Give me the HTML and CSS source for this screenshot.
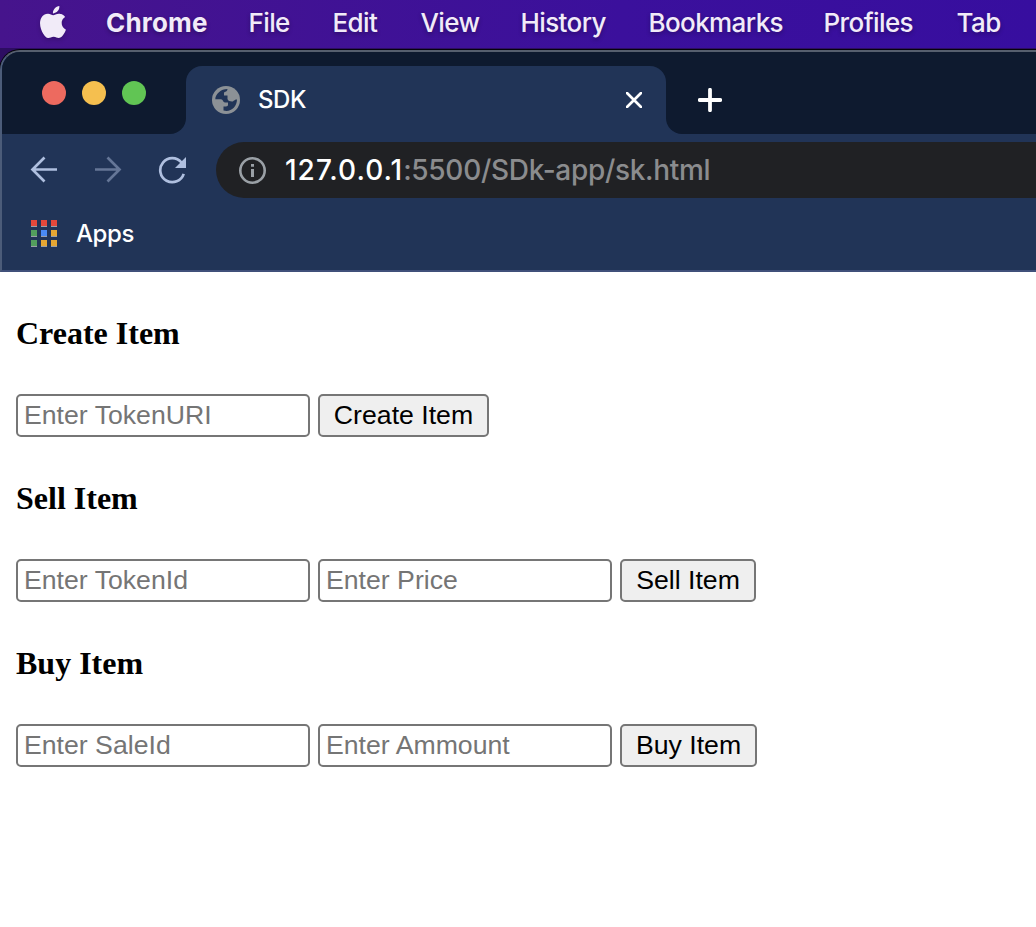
FILE: index.html
```html
<!DOCTYPE html>
<html lang="en">
<head>
<meta charset="utf-8">
<title>SDK</title>
<link rel="stylesheet" href="styles.css">
</head>
<body>
<nav class="menubar">
  <svg class="apple" viewBox="2.2 0 19.6 24" preserveAspectRatio="none"><path fill="#f1ebf8" d="M12.152 6.896c-.948 0-2.415-1.078-3.96-1.04-2.04.027-3.91 1.183-4.961 3.014-2.117 3.675-.546 9.103 1.519 12.09 1.013 1.454 2.208 3.09 3.792 3.039 1.52-.065 2.09-.987 3.935-.987 1.831 0 2.35.987 3.96.948 1.637-.026 2.676-1.48 3.676-2.948 1.156-1.688 1.636-3.325 1.662-3.415-.039-.013-3.182-1.221-3.22-4.857-.026-3.04 2.48-4.494 2.597-4.559-1.429-2.09-3.623-2.324-4.39-2.376-2-.156-3.675 1.09-4.61 1.09zM15.53 3.83c.843-1.012 1.4-2.427 1.245-3.83-1.207.052-2.662.805-3.532 1.818-.78.896-1.454 2.338-1.273 3.714 1.338.104 2.715-.688 3.559-1.701"/></svg>
  <span class="menu menu-app">Chrome</span>
  <span class="menu">File</span>
  <span class="menu">Edit</span>
  <span class="menu">View</span>
  <span class="menu">History</span>
  <span class="menu">Bookmarks</span>
  <span class="menu">Profiles</span>
  <span class="menu">Tab</span>
</nav>
<div class="desktop">
<div class="window">
  <div class="tabstrip">
    <div class="lights"><i class="light red"></i><i class="light yellow"></i><i class="light green"></i></div>
    <div class="tab">
      <svg class="globe" viewBox="0 0 28 28"><circle cx="14" cy="14" r="14" fill="#8c9196"/><path fill="#213457" d="M3.300 13.300C3.300 8 9 3 15.500 3C15.500 5 14 5.500 12 6.500V9.500H15.500V13C16 14.800 18 15.500 20 15.500C22 15.500 22 13.500 25 13.500C25 20 20 25 14.500 25L11.500 24.500V20.500H14C15.500 20.500 16 19.500 16 18.500V16.500H13C11 16.500 11 13.300 9 13.300Z"/></svg>
      <span class="tab-title">SDK</span>
      <svg class="close" viewBox="0 0 16 16"><path d="M1 1 15 15M15 1 1 15" stroke="#fff" stroke-width="2.700" stroke-linecap="round"/></svg>
    </div>
    <div class="rest"><svg class="plus" viewBox="0 0 24 24"><path d="M12 1.700V22.300M1.700 12H22.300" stroke="#fff" stroke-width="3.800" stroke-linecap="round"/></svg></div>
  </div>
  <div class="toolbar">
    <svg class="nav" viewBox="0 0 28 28" fill="none" stroke="#afbfdf" stroke-width="2.700"><path d="M27 13.500H2.500M14.500 1.500 2.500 13.500 14.500 25.500"/></svg>
    <svg class="nav" viewBox="0 0 28 28" fill="none" stroke="#657697" stroke-width="2.700"><path d="M1 13.500H25.500M13.500 1.500 25.500 13.500 13.500 25.500"/></svg>
    <svg class="nav" viewBox="0 0 28 28" fill="none" stroke="#afbfdf" stroke-width="2.700"><path d="M25.700 17.800A12 12 0 1 1 23.500 6.500"/><path fill="#afbfdf" stroke="none" d="M28 1V12H17Z"/></svg>
    <div class="omnibox">
      <svg class="info" viewBox="0 0 28 28"><circle cx="14.500" cy="14.500" r="12.200" fill="none" stroke="#9aa0a6" stroke-width="2.600"/><path fill="#9aa0a6" d="M13 8h3v2.700h-3zM13 13h3v8h-3z"/></svg>
      <span class="url"><span class="host">127.0.0.1</span><span class="path">:5500/SDk-app/sk.html</span></span>
    </div>
  </div>
  <div class="bookmarks">
    <div class="apps"><i class="r"></i><i class="r"></i><i class="r"></i><i class="g"></i><i class="b"></i><i class="y"></i><i class="g"></i><i class="y"></i><i class="y"></i></div>
    <span class="apps-label">Apps</span>
  </div>
</div>
</div>
<main class="page">
  <h4>Create Item</h4>
  <div class="row"><input type="text" placeholder="Enter TokenURI"><button>Create Item</button></div>
  <h4>Sell Item</h4>
  <div class="row"><input type="text" placeholder="Enter TokenId"><input type="text" placeholder="Enter Price"><button class="sell">Sell Item</button></div>
  <h4>Buy Item</h4>
  <div class="row"><input type="text" placeholder="Enter SaleId"><input type="text" placeholder="Enter Ammount"><button class="buy">Buy Item</button></div>
</main>
</body>
</html>
```
FILE: styles.css
```css
* { box-sizing: border-box; }
body { margin: 0; height: 927px; overflow: hidden; background: #fff; font-family: Inter, sans-serif; }
svg { display: block; flex: none; }

.menubar { display: grid; grid-template-columns: 66px 142px 84px 88px 100px 128px 175px 133px 80px; align-items: center; height: 48px; padding-left: 40px; background: linear-gradient(90deg, #46148c, #3b109c 60%, #370e9f); color: #f1ebf8; }
.apple { width: 26px; height: 32px; margin-bottom: 4px; filter: drop-shadow(0 2px 2px rgba(0,0,0,.2)); }
.menu { font-size: 26px; font-weight: 500; letter-spacing: -.6px; line-height: 46px; height: 48px; padding-left: .5px; white-space: nowrap; text-shadow: 0 2px 4px rgba(0,0,0,.3); }
.menu-app { font-weight: 700; letter-spacing: .2px; padding-left: 0; }

.desktop { height: 224px; padding-top: 2px; background: #2d0d62; overflow: hidden; }
.window { height: 222px; border-radius: 20px 0 0 0; border-top: 2px solid #565f6e; border-left: 2px solid #4c5c79; border-bottom: 2px solid #40507a; background: #213457; overflow: hidden; box-shadow: 0 0 0 1px #05030c; }
.tabstrip { display: flex; height: 82px; background: #213457; }
.lights { display: flex; gap: 16px; width: 184px; padding: 29px 0 0 40px; background: #0e1a2f; border-radius: 0 0 16px 0; }
.light { width: 24px; height: 24px; border-radius: 50%; }
.red { background: #ed6a5f; }
.yellow { background: #f5bf4f; }
.green { background: #61c554; }
.tab { display: flex; align-items: center; width: 480px; padding: 14px 24px 0 26px; background: linear-gradient(#0e1a2f 50%, #213457 50%); position: relative; z-index: 0; }
.tab::before { content: ""; position: absolute; inset: 14px 0 0; z-index: -1; background: #213457; border-radius: 16px 16px 0 0; }
.globe { width: 28px; height: 28px; }
.tab-title { margin-left: 18px; padding-bottom: 1px; font-size: 24px; font-weight: 500; letter-spacing: -.4px; color: #fff; flex: 1; }
.close { width: 16px; height: 16px; }
.rest { flex: 1; background: #0e1a2f; border-radius: 0 0 0 16px; padding: 36px 0 0 32px; }
.plus { width: 24px; height: 24px; }

.toolbar { display: flex; align-items: center; gap: 36px; height: 72px; padding-left: 28px; }
.nav { width: 28px; height: 28px; }
.omnibox { display: flex; align-items: center; flex: 1; height: 56px; margin-left: -6px; padding-left: 22px; border-radius: 28px 0 0 28px; background: #202124; }
.info { width: 28px; height: 28px; }
.url { margin-left: 19px; font-size: 28px; font-weight: 500; white-space: nowrap; }
.host { color: #fff; letter-spacing: 1px; }
.path { color: #8b8c8e; letter-spacing: -.3px; }

.bookmarks { display: flex; align-items: center; height: 56px; padding: 0 0 2px 29px; }
.apps { display: grid; grid-template-columns: repeat(3, 6px); gap: 3px 4px; }
.apps i { height: 7px; border-bottom: 1px solid #9a9fa8; }
.r { background: #e4483b; }
.g { background: #539e5d; }
.b { background: #4a8af4; }
.y { background: #e6a634; }
.apps-label { margin-left: 19px; font-size: 24px; font-weight: 500; letter-spacing: -.4px; color: #fff; }

.page { padding: 0 16px; }
.page h4 { margin: 0; padding-top: 42px; height: 122px; font: bold 32px/38px "Liberation Serif", serif; color: #000; }
.row { display: flex; gap: 8px; height: 43px; }
input, button { font: 26.660px "Liberation Sans", sans-serif; border: 2px solid #767676; border-radius: 5px; height: 43px; }
input { width: 294px; padding: 0 6px; background: #fff; }
input::placeholder { color: #757575; }
button { width: 171px; padding: 0; background: #efefef; color: #000; white-space: nowrap; }
.sell { width: 136px; }
.buy { width: 137px; }
```
